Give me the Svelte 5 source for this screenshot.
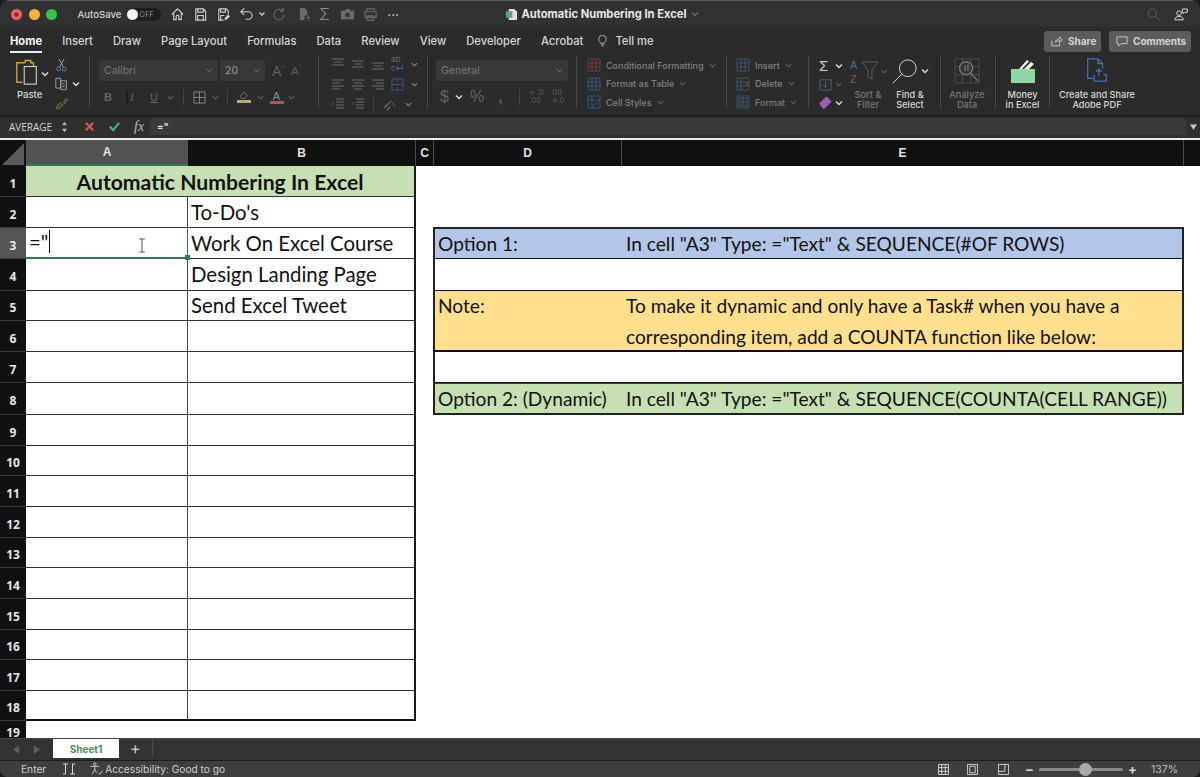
<script>
  const cols = ['A','B','C','D','E'];
  const rows = Array.from({length:19},(_,i)=>i+1);
  const emptyRows = [6,7,8,9,10,11,12,13,14,15,16,17,18];
  const tabs = ['Home','Insert','Draw','Page Layout','Formulas','Data','Review','View','Developer','Acrobat'];
</script>

<div class="window">
  <header class="titlebar">
    <div class="tb-left">
      <span class="light l-red"></span><span class="light l-yellow"></span><span class="light l-green"></span>
      <span class="autosave">AutoSave</span>
      <span class="toggle"><span class="knob"></span><span class="off">OFF</span></span>
      <svg class="qa first" viewBox="0 0 16 16"><path d="M2 8 8 2l6 6M4 7v6.500h2.600V10a1.400 1.400 0 0 1 2.800 0v3.500H12V7"/></svg>
      <svg class="qa" viewBox="0 0 16 16"><path d="M3 2h8l2.500 2.500V14H3zM5 2v3.500h6V2M5 14V9h6v5"/></svg>
      <svg class="qa" viewBox="0 0 16 16"><path d="M3 2h8l2 2v4M3 2v12h5M5 2v3.500h5V2M5 14V9h4"/><path class="fill" d="m9 14 .6-2.600 3.400-3.400 2 2-3.400 3.400z"/></svg>
      <svg class="qa undo" viewBox="0 0 16 16"><path d="M2 5h8a3.800 3.800 0 0 1 0 8H7M5.500 1.500 2 5l3.500 3.500"/></svg>
      <svg class="caret" viewBox="0 0 8 8"><path d="m1.500 2.500 2.500 2.500 2.500-2.500"/></svg>
      <svg class="qa dim redo" viewBox="0 0 16 16"><path d="M13 8a5.500 5.500 0 1 1-1.800-4M12 1v3.500H8.500"/></svg>
      <svg class="qa dim sortico" viewBox="0 0 16 16"><path class="fill" d="M3 1h5l3 3v5H8v5H3z"/><path d="M12 9v5M9.500 11.500h5"/></svg>
      <span class="qa-sigma">Σ</span>
      <svg class="qa dim camera" viewBox="0 0 16 16"><path class="fill" d="M1 4h4l1-2h4l1 2h4v9H1z"/><circle class="hole" cx="8" cy="8.500" r="2.500"/></svg>
      <svg class="qa dim" viewBox="0 0 16 16"><path d="M4 5V2h8v3M2 5h12v6H2zM4.500 9.500h7V14h-7z"/></svg>
      <span class="more">•••</span>
    </div>
    <div class="tb-title">
      <svg class="docicon" viewBox="0 0 14 14"><path class="doc-w" d="M4 1h6l3 3v9H4z"/><path class="doc-g" d="M1 3.500h7v7H1z"/></svg>
      <span>Automatic Numbering In Excel</span>
      <svg class="caret faint" viewBox="0 0 8 8"><path d="m1 2.500 3 3 3-3"/></svg>
    </div>
    <div class="tb-right">
      <svg class="search" viewBox="0 0 16 16"><circle cx="6.500" cy="6.500" r="5"/><path d="m10 10 5 5"/></svg>
      <svg class="people" viewBox="0 0 18 16"><circle cx="6" cy="7" r="2.800"/><path d="M1 15c0-3 2-4 5-4s5 1 5 4zM10 2h6v4h-3l-2 1.500V6h-1z"/></svg>
    </div>
  </header>

  <nav class="tabbar">
    {#each tabs as t, i}
      <span class="tab" class:active={i===0}>{t}</span>
    {/each}
    <svg class="bulb" viewBox="0 0 12 16"><path d="M3.500 11C3 9 1 8 1 5.500a5 5 0 0 1 10 0C11 8 9 9 8.500 11zM4 13h4M5 15h2"/></svg>
    <span class="tab tellme">Tell me</span>
    <span class="spacer"></span>
    <button class="pill share">
      <svg viewBox="0 0 14 12"><path d="M1 5v6h9V8M5 7c.5-3 3-4 5-4V1l3.500 3L10 7V5C8 5 6 5.500 5 7z"/></svg>Share
    </button>
    <button class="pill comments">
      <svg viewBox="0 0 14 13"><path d="M1 1h12v8H6l-3 3V9H1z"/></svg>Comments
    </button>
  </nav>

  <section class="ribbon">
    <div class="grp clip">
      <div class="paste">
        <svg class="paste-ico" viewBox="0 0 28 30">
          <path class="clipb" d="M12 4H3v21h6M12 4V1.500h6V4h3v4"/>
          <rect class="pdoc" x="11" y="8" width="13" height="19"/>
        </svg>
        <svg class="mini-caret" viewBox="0 0 8 8"><path d="m1 2.500 3 3 3-3"/></svg>
        <span class="paste-l">Paste</span>
      </div>
      <div class="clip-tools">
        <svg class="tool" viewBox="0 0 14 16"><path class="grey" d="M4 1l5 9M10 1 5 10"/><circle class="s-blue" cx="3.800" cy="12.500" r="2.200"/><circle class="s-blue" cx="10.200" cy="12.500" r="2.200"/></svg>
        <div class="rowc"><svg class="tool" viewBox="0 0 16 16"><path class="grey" d="M1 1h6v12H1zM7 4h7v11H7z"/><path class="grey" d="M9 8h3M9 11h3"/></svg><svg class="mini-caret" viewBox="0 0 8 8"><path d="m1 2.500 3 3 3-3"/></svg></div>
        <svg class="tool painter" viewBox="0 0 16 16"><path class="olive" d="M2 14c0-3 1-5 4-7l3 3c-2 3-4 4-7 4zM9 7l4-5 1.500 1.500-4 5"/></svg>
      </div>
    </div>

    <div class="grp font">
      <div class="frow">
        <span class="box fname">Calibri<svg class="dim-caret" viewBox="0 0 8 8"><path d="m1 2.500 3 3 3-3"/></svg></span>
        <span class="box fsize">20<svg class="dim-caret" viewBox="0 0 8 8"><path d="m1 2.500 3 3 3-3"/></svg></span>
        <span class="aa big">A<sup>^</sup></span><span class="aa small">A<sup>ˇ</sup></span>
      </div>
      <div class="frow second">
        <span class="fmt b">B</span><span class="fmt i">I</span><span class="fmt u">U</span>
        <svg class="dim-caret" viewBox="0 0 8 8"><path d="m1 2.500 3 3 3-3"/></svg>
        <i class="vr"></i>
        <svg class="bord" viewBox="0 0 14 14"><path d="M1 1h12v12H1zM7 1v12M1 7h12"/></svg>
        <svg class="dim-caret" viewBox="0 0 8 8"><path d="m1 2.500 3 3 3-3"/></svg>
        <i class="vr"></i>
        <span class="colored"><svg class="bucket" viewBox="0 0 14 10"><path d="m3 6 4-5 4 4-3 3H4z"/></svg><i class="bar tan"></i></span>
        <svg class="dim-caret" viewBox="0 0 8 8"><path d="m1 2.500 3 3 3-3"/></svg>
        <span class="colored second-color"><span class="fa">A</span><i class="bar rose"></i></span>
        <svg class="dim-caret" viewBox="0 0 8 8"><path d="m1 2.500 3 3 3-3"/></svg>
      </div>
    </div>

    <div class="grp align">
      <div class="aligngrid">
        <svg class="al" viewBox="0 0 14 12"><path d="M1 1h12M3 4h8M1 7h12"/></svg>
        <svg class="al" viewBox="0 0 14 12"><path d="M1 3h12M3 6h8M1 9h12"/></svg>
        <svg class="al" viewBox="0 0 14 12"><path d="M1 5h12M3 8h8M1 11h12"/></svg>
        <span class="abc">ab<br/>c<b>↵</b></span>
        <svg class="al-caret" viewBox="0 0 8 8"><path d="m1 2.500 3 3 3-3"/></svg>
        <svg class="al" viewBox="0 0 14 12"><path d="M1 2h12M1 5h8M1 8h12M1 11h8"/></svg>
        <svg class="al" viewBox="0 0 14 12"><path d="M1 2h12M3 5h8M1 8h12M3 11h8"/></svg>
        <svg class="al" viewBox="0 0 14 12"><path d="M1 2h12M5 5h8M1 8h12M5 11h8"/></svg>
        <svg class="merge" viewBox="0 0 14 14"><path class="bl2" d="M1 1h12v12H1zM1 7h3M10 7h3M7 1v3M7 10v3"/><path class="bl2" d="M4 7h6"/></svg>
        <svg class="al-caret" viewBox="0 0 8 8"><path d="m1 2.500 3 3 3-3"/></svg>
        <svg class="al" viewBox="0 0 14 12"><path class="bl2" d="m1 4 2 1.500L1 7"/><path d="M5 1h8M5 4h8M5 7h8M5 10h8"/></svg>
        <svg class="al" viewBox="0 0 14 12"><path class="bl2" d="M3 4 1 5.500 3 7"/><path d="M5 1h8M5 4h8M5 7h8M5 10h8"/></svg>
        <i class="vr al-vr"></i>
        <svg class="orient" viewBox="0 0 14 14"><path d="m2 11 6-6M5 13l3-3"/><path class="bl2" d="m9 4 4 6"/></svg>
        <svg class="al-caret lastc" viewBox="0 0 8 8"><path d="m1 2.500 3 3 3-3"/></svg>
      </div>
    </div>

    <div class="grp number">
      <span class="box general">General<svg class="dim-caret" viewBox="0 0 8 8"><path d="m1 2.500 3 3 3-3"/></svg></span>
      <div class="frow numrow">
        <span class="nm">$</span>
        <svg class="mini-caret" viewBox="0 0 8 8"><path d="m1 2.500 3 3 3-3"/></svg>
        <span class="nm pct-ico">%</span>
        <span class="nm comma">,</span>
        <i class="vr"></i>
        <span class="dec"><b>←</b>.0<br/>.00</span>
        <span class="dec">.00<br/><b>→</b>.0</span>
      </div>
    </div>

    <div class="grp styles">
      <div class="sline"><svg class="cellico" viewBox="0 0 14 14"><path class="s-red" d="M1 1h12v12H1zM1 5h12M1 9h12M5 1v12M9 1v12"/></svg>Conditional Formatting<svg class="dim-caret" viewBox="0 0 8 8"><path d="m1 2.500 3 3 3-3"/></svg></div>
      <div class="sline"><svg class="cellico" viewBox="0 0 14 14"><path class="bl2" d="M1 1h12v12H1zM1 5h12M1 9h12M5 1v12M9 1v12"/></svg>Format as Table<svg class="dim-caret" viewBox="0 0 8 8"><path d="m1 2.500 3 3 3-3"/></svg></div>
      <div class="sline"><svg class="cellico" viewBox="0 0 14 14"><path class="bl2" d="M1 1h12v12H1zM1 5h12M5 1v12M4 13l9-8"/></svg>Cell Styles<svg class="dim-caret" viewBox="0 0 8 8"><path d="m1 2.500 3 3 3-3"/></svg></div>
    </div>

    <div class="grp cells">
      <div class="sline"><svg class="cellico" viewBox="0 0 14 14"><path class="bl2" d="M1 1h12v12H1zM1 5h12M1 9h12M5 1v12M9 1v12"/></svg>Insert<svg class="dim-caret" viewBox="0 0 8 8"><path d="m1 2.500 3 3 3-3"/></svg></div>
      <div class="sline"><svg class="cellico" viewBox="0 0 14 14"><path class="bl2" d="M1 1h12v12H1zM1 5h12M1 9h12M5 1v12"/><path class="s-red" d="m9 5 4 4M13 5 9 9"/></svg>Delete<svg class="dim-caret" viewBox="0 0 8 8"><path d="m1 2.500 3 3 3-3"/></svg></div>
      <div class="sline"><svg class="cellico" viewBox="0 0 14 14"><path class="bl2" d="M3 3h8v8H3zM3 7h8M7 3v8M1 1v12M13 1v12M1 1h12M1 13h12"/></svg>Format<svg class="dim-caret" viewBox="0 0 8 8"><path d="m1 2.500 3 3 3-3"/></svg></div>
    </div>

    <div class="grp editing">
      <div class="ed-col">
        <div class="rowc"><span class="sig">Σ</span><svg class="mini-caret" viewBox="0 0 8 8"><path d="m1 2.500 3 3 3-3"/></svg></div>
        <div class="rowc"><svg class="fillico" viewBox="0 0 14 14"><path d="M1 2h12v11H1zM7 4v6M5 8l2 2 2-2"/></svg><svg class="dim-caret" viewBox="0 0 8 8"><path d="m1 2.500 3 3 3-3"/></svg></div>
        <div class="rowc"><svg class="eraser" viewBox="0 0 14 14"><path d="m1 8 7-7 5 5-7 7H4z"/></svg><svg class="mini-caret" viewBox="0 0 8 8"><path d="m1 2.500 3 3 3-3"/></svg></div>
      </div>
      <div class="big-btn sort">
        <div class="rowc"><svg class="sortf" viewBox="0 0 32 26"><text class="az a" x="1" y="11">A</text><text class="az z" x="1" y="25">Z</text><path d="M13 4h16l-6 8v9l-4-2v-7z"/></svg><svg class="dim-caret" viewBox="0 0 8 8"><path d="m1 2.500 3 3 3-3"/></svg></div>
        <span class="l dim-l">Sort &amp;<br/>Filter</span>
      </div>
      <div class="big-btn find">
        <div class="rowc"><svg class="lens" viewBox="0 0 28 28"><circle cx="17" cy="11" r="9"/><path d="M10.500 17.500 1 27"/></svg><svg class="mini-caret" viewBox="0 0 8 8"><path d="m1 2.500 3 3 3-3"/></svg></div>
        <span class="l">Find &amp;<br/>Select</span>
      </div>
    </div>

    <div class="grp big-btn analyze">
      <svg class="an" viewBox="0 0 28 28"><path d="M1 1h26v26H1zM1 9h26M1 18h26M9 1v26M18 1v26"/><circle class="ring" cx="13" cy="11" r="7"/><path class="thick" d="m18 16 8 9"/><path class="bars" d="M11 8h2v6h-2zM14 7h2v7h-2z"/></svg>
      <span class="l dim-l">Analyze<br/>Data</span>
    </div>

    <div class="grp big-btn money">
      <svg class="mo" viewBox="0 0 26 26"><path class="mg" d="M1 11h24v14H1z"/><path class="mw" d="m9 11 8-9 2 1.500-7 7.500zM14 11l7-7 3 2-5 5z"/></svg>
      <span class="l">Money<br/>in Excel</span>
    </div>

    <div class="grp big-btn adobe">
      <svg class="pdf" viewBox="0 0 24 28"><path d="M8 22H2V1h11l5 5v5M13 1v5h5M14 19v-7m-3 3 3-3 3 3M9 18v7h13v-7h-3"/></svg>
      <span class="l">Create and Share<br/>Adobe PDF</span>
    </div>
  </section>

  <div class="formulabar">
    <span class="namebox">AVERAGE</span>
    <span class="stepper"><svg viewBox="0 0 8 14"><path d="M4 1 7 5H1zM4 13 1 9h6z"/></svg></span>
    <svg class="fx-x" viewBox="0 0 12 12"><path d="m2 2 8 8M10 2l-8 8"/></svg>
    <svg class="fx-c" viewBox="0 0 14 12"><path d="m2 6 3.500 4L12 2"/></svg>
    <span class="fx">fx</span>
    <span class="finput">="</span>
    <span class="fdrop"><svg viewBox="0 0 8 6"><path d="M0 0h8L4 6z"/></svg></span>
  </div>

  <div class="colhead">
    <span class="corner"><svg viewBox="0 0 24 24"><path d="M24 0v24H0z"/></svg></span>
    {#each cols as c, i}
      <span class="col col-{c}" class:sel={i===0}>{c}</span>
    {/each}
    <span class="col-rest"></span>
  </div>

  <main class="sheet-area">
    <div class="sheet">
      {#each rows as r}
        <span class="rh" class:rsel={r===3} style="grid-row:{r}">{r}</span>
      {/each}

      <div class="c merged title">Automatic Numbering In Excel</div>

      <div class="c a r2"></div>
      <div class="c b r2">To-Do's</div>
      <div class="c a r3 editing-cell">="<i class="caretbar"></i>
        <svg class="ibeam" viewBox="0 0 8 16"><path d="M1 1h6M4 1v14M1 15h6"/></svg>
        <i class="handle"></i>
      </div>
      <div class="c b r3">Work On Excel Course</div>
      <div class="c a r4"></div>
      <div class="c b r4">Design Landing Page</div>
      <div class="c a r5"></div>
      <div class="c b r5">Send Excel Tweet</div>
      {#each emptyRows as r}
        <div class="c a" class:last={r===18} style="grid-row:{r}"></div>
        <div class="c b" class:last={r===18} style="grid-row:{r}"></div>
      {/each}

      <div class="o d o-blue r3">Option 1:</div>
      <div class="o e o-blue r3">In cell "A3" Type: ="Text" &amp; SEQUENCE(#OF ROWS)</div>
      <div class="o span r4"></div>
      <div class="o d o-yellow note">Note:</div>
      <div class="o e o-yellow note">To make it dynamic and only have a Task# when you have a<br/>corresponding item, add a COUNTA function like below:</div>
      <div class="o span r7"></div>
      <div class="o d o-green r8">Option 2: (Dynamic)</div>
      <div class="o e o-green r8">In cell "A3" Type: ="Text" &amp; SEQUENCE(COUNTA(CELL RANGE))</div>
    </div>
  </main>

  <div class="sheetbar">
    <svg class="nav" viewBox="0 0 8 10"><path d="M7 0v10L0 5z"/></svg>
    <svg class="nav" viewBox="0 0 8 10"><path d="M1 0v10l7-5z"/></svg>
    <span class="stab">Sheet1</span>
    <span class="plus">+</span>
    <i class="sb-sep"></i>
  </div>

  <footer class="status">
    <span class="st-enter">Enter</span>
    <svg class="st-ico macro" viewBox="0 0 14 14"><path d="M1 2h5M3.500 2v10H1M8 12h5M10.500 12V2H13"/></svg>
    <svg class="st-ico acc" viewBox="0 0 16 16"><circle cx="6" cy="2.500" r="1.500"/><path d="M1 5h10M6 5v4l-3 5M6 9l2 3M10 12l2 2 3-4"/></svg>
    <span class="st-acc">Accessibility: Good to go</span>
    <span class="spacer"></span>
    <svg class="st-view st-first" viewBox="0 0 12 12"><path d="M.5.500h11v11H.5zM4 .500v11M8 .500v11M.5 4h11M.5 8h11"/></svg>
    <svg class="st-view" viewBox="0 0 12 12"><path d="M.5.500h11v11H.5zM3 2.500h6v7H3z"/></svg>
    <svg class="st-view st-last" viewBox="0 0 12 12"><path d="M.5.500h11v11H.5zM.5 8h7V.500"/></svg>
    <span class="zm">−</span>
    <span class="slider"><i class="thumb"></i></span>
    <span class="zm">+</span>
    <span class="pct">137%</span>
  </footer>
</div>

<style>
  :global(body){margin:0;background:#1c1c1c;}
  .window{width:1200px;height:777px;display:flex;flex-direction:column;overflow:hidden;border-radius:10px 10px 8px 8px;background:#2c2c2c;font-family:Inter,"Liberation Sans",sans-serif;color:#e8e8e8;position:relative;}
  svg{fill:none;stroke:currentColor;flex:none;display:block;}
  .spacer{flex:1;}
  .rowc{display:flex;align-items:center;}

  /* title bar */
  .titlebar{height:27px;flex:none;background:#313131;display:grid;grid-template-columns:1fr auto 1fr;align-items:center;border-top:1px solid #5a5a5a;box-sizing:border-box;}
  .tb-left{display:flex;align-items:center;padding-left:11px;}
  .light{width:11px;height:11px;border-radius:50%;margin-right:6.500px;}
  .l-red{background:radial-gradient(circle,#a8182a 0 20%,#ec5f67 35%);}
  .l-yellow{background:#f2b33c}.l-green{background:#37c24f}
  .autosave{margin-left:14px;font-size:9.600px;font-weight:500;color:#d4d4d4;}
  .toggle{margin-left:5px;width:34px;height:13px;border-radius:7px;background:#1d1d1d;display:flex;align-items:center;gap:2px;}
  .knob{width:11px;height:11px;border-radius:50%;background:#f4f4f4;}
  .off{font-size:7px;color:#9a9a9a;letter-spacing:.3px;}
  .qa{width:15px;height:15px;color:#cfcfcf;margin-left:8px;stroke-width:1.200;}
  .qa.first{margin-left:9px;}
  .qa .fill{fill:currentColor;stroke:none;}
  .qa.dim{color:#6b6b6b;}
  .qa.redo{margin-left:6.500px;}
  .caret{width:8px;height:8px;stroke-width:1.300;color:#cfcfcf;margin-left:4px;}
  .caret.faint{color:#6a6a6a;margin-left:1px;}
  .qa-sigma{margin-left:7px;font-size:16px;color:#8a8a8a;width:13px;font-weight:300;}
  .qa.sortico{margin-left:10px;}
  .qa.camera{margin-left:8px;}
  .hole{fill:#313131;stroke:none;}
  .more{margin-left:9.500px;font-size:6px;letter-spacing:.5px;color:#cfcfcf;}
  .tb-title{display:flex;align-items:center;font-size:11.200px;font-weight:700;color:#e6e6e6;gap:3px;margin-left:4px;}
  .docicon{width:13px;height:13px;stroke:none;}
  .doc-w{fill:#e2e2e2;stroke:none}.doc-g{fill:#5fa37a;stroke:none}
  .tb-right{display:flex;justify-content:flex-end;align-items:center;gap:14px;padding-right:11px;}
  .search{width:13px;height:13px;color:#666;stroke-width:1;}
  .people{width:15px;height:14px;color:#d8d8d8;stroke-width:1.200;}

  /* tabs */
  .tabbar{height:28px;flex:none;background:#2b2b2b;display:flex;align-items:center;padding:0 9px 0 10px;box-sizing:border-box;}
  .tab{font-size:11.200px;font-weight:500;color:#d6d6d6;margin-right:20.100px;position:relative;line-height:14px;}
  .tab.active{color:#f5f5f5;font-weight:700;}
  .tab.active::after{content:"";position:absolute;left:0;right:0;bottom:-5px;height:2px;background:#eee;}
  .bulb{width:9px;height:14px;color:#cfcfcf;margin:0 8px 0 -5px;stroke-width:1;}
  .tab.tellme{margin:0;}
  .pill{height:21px;border:0;border-radius:3px;background:#5c5c5c;color:#d4d4d4;font:700 10px Inter,"Liberation Sans",sans-serif;display:flex;align-items:center;gap:5px;padding:0 6px;}
  .pill svg{width:12px;height:11px;stroke-width:1;}
  .pill.share{width:57px;margin-right:8px;padding-left:7px;box-sizing:border-box;}
  .pill.comments{width:82px;box-sizing:border-box;padding-left:7px;}

  /* ribbon */
  .ribbon{height:60px;flex:none;background:#2b2b2b;display:flex;box-sizing:border-box;padding:1px 0 7px;box-shadow:0 1px 2px #111;position:relative;z-index:1;}
  .grp{box-sizing:border-box;border-right:1px solid #4a4a4a;position:relative;}
  .grp:last-child{border-right:0;}
  .clip{width:90px;display:flex;padding-left:14px;}
  .paste{width:34px;position:relative;padding-top:3px;}
  .paste-ico{width:26px;height:28px;}
  .clipb{stroke:#d0a040;stroke-width:1.500;}
  .pdoc{stroke:#cfcfcf;stroke-width:1.200;}
  .paste .mini-caret{position:absolute;left:27px;top:14px;}
  .paste-l{display:block;font-size:9.500px;font-weight:500;color:#d8d8d8;margin-top:2px;margin-left:3px;}
  .mini-caret{width:8px;height:8px;color:#d8d8d8;stroke-width:1.500;}
  .dim-caret{width:7px;height:7px;color:#666;stroke-width:1.200;}
  .clip-tools{display:flex;flex-direction:column;gap:5px;padding-left:4px;margin-top:2px;}
  .tool{width:13px;height:14px;stroke-width:1;}
  .clip-tools .tool:first-child{margin-left:3px;}
  .clip-tools .mini-caret{margin-left:4px;}
  .painter{width:14px;height:15px;margin-left:3px;}
  .grey{stroke:#b5b5b5}.s-blue{stroke:#5590d0}.olive{stroke:#7f8460;fill:#3e3e30}

  .font{width:229px;padding:4px 0 0 9px;}
  .frow{display:flex;align-items:center;}
  .box{height:21px;background:#383838;border-radius:2px;font-size:10px;color:#7a7a7a;display:flex;align-items:center;justify-content:space-between;padding:0 5px;box-sizing:border-box;}
  .fname{width:119px;margin-right:2px;font-size:10.500px;}
  .fsize{width:45px;font-size:10.500px;color:#9a9a9a;}
  .aa{color:#5f5f5f;font-size:14px;margin-left:7px;font-family:"Liberation Sans",sans-serif;}
  .aa sup{font-size:8px;line-height:0;}
  .aa.small{font-size:11.500px;margin-left:6px;}
  .second{margin-top:6px;height:20px;padding-left:5px;}
  .fmt{color:#666;font-size:11px;width:22px;font-family:"Liberation Sans",sans-serif;}
  .fmt.b{font-weight:700;}.fmt.i{font-style:italic;font-family:"Liberation Serif",serif;padding-left:2px;width:20px;}.fmt.u{text-decoration:underline;width:17px;}
  .vr{display:block;width:1px;height:16px;background:#454545;margin:0 9px 0 8.500px;flex:none;}
  .bord{width:13px;height:13px;color:#888;stroke-width:1;margin-right:6px;}
  .colored{display:flex;flex-direction:column;align-items:center;width:14px;margin-right:6px;}
  .colored.second-color{margin:0 4.500px 0 5.500px;}
  .bucket{width:14px;height:9px;color:#777;stroke-width:1;}
  .bar{display:block;width:14px;height:3px;}
  .tan{background:#b5a878}.rose{background:#b2525a}
  .fa{font-size:11px;line-height:10px;color:#8a8a8a;font-family:"Liberation Sans",sans-serif;}

  .align{width:109px;padding:0 0 0 12px;}
  .aligngrid{display:grid;grid-template-columns:20px 20px 20px 20px 14px;grid-auto-rows:20px;align-items:center;margin-top:-2px;}
  .al{width:14px;height:12px;color:#6c6c6c;stroke-width:1;}
  .abc{font-size:8px;line-height:9px;color:#666;}
  .abc b{color:#3f6fa0;}
  .merge{width:13px;height:13px;stroke-width:1;}
  .al-caret{width:7px;height:7px;color:#8a8a8a;stroke-width:1.300;}
  .al-vr{margin:0 0 0 2px;height:17px;}
  .orient{width:14px;height:14px;color:#7a6a7a;stroke-width:1.100;margin-left:-9px;}
  .lastc{margin-left:-6px;}

  .number{width:149px;padding:4px 0 0 8px;}
  .general{width:132px;font-size:10.500px;}
  .numrow{margin-top:6px;height:20px;padding-left:4px;}
  .nm{font-size:16px;color:#626262;margin-right:8px;font-family:"Liberation Sans",sans-serif;}
  .numrow .mini-caret{margin-right:5px;margin-left:-2px;}
  .pct-ico{font-size:16px;margin-left:2px;}
  .comma{margin-left:6px;font-weight:700;line-height:10px;}
  .numrow .vr{margin:0 10px 0 8px;}
  .dec{font-size:7.500px;line-height:8px;color:#5f5f5f;margin-right:7px;}
  .dec b{color:#3f6fa0;font-weight:400;}

  .styles{width:150px;padding:2px 0 0 10px;display:flex;flex-direction:column;gap:4.500px;}
  .cells{width:82px;padding:2px 0 0 9px;display:flex;flex-direction:column;gap:4.500px;}
  .sline{display:flex;align-items:center;font-size:9px;font-weight:500;color:#808080;height:14px;gap:5px;white-space:nowrap;}
  .cellico{width:14px;height:14px;stroke-width:.9;}
  .s-red{stroke:#7f3a40}.bl2{stroke:#42597a}

  .editing{width:132px;display:flex;padding-left:10px;}
  .ed-col{display:flex;flex-direction:column;gap:5px;width:30px;padding-top:3px;}
  .ed-col .rowc{height:14px;gap:3px;}
  .sig{font-size:15px;width:13px;color:#c8c8c8;line-height:14px;font-family:"Liberation Sans",sans-serif;}
  .fillico{width:13px;height:13px;color:#55687a;stroke-width:1;}
  .eraser{width:13px;height:13px;color:#b06ac0;fill:#a45cb0;stroke-width:1;}
  .big-btn{display:flex;flex-direction:column;align-items:center;padding-top:2px;}
  .sort{width:44px;margin-left:-3px;}
  .find{width:40px;}
  .sortf{width:32px;height:26px;color:#5d5d5d;stroke-width:1;}
  .az{font:11px "Liberation Sans",sans-serif;stroke:none;}
  .az.a{fill:#3f6fa0}.az.z{fill:#666}
  .lens{width:26px;height:26px;color:#dadada;stroke-width:1;}
  .find .mini-caret{margin-left:3px;}
  .l{font-size:9.200px;font-weight:500;line-height:10px;text-align:center;color:#d8d8d8;display:block;margin-top:6px;}
  .dim-l{color:#777;}
  .analyze{width:55px;padding-right:2px;}
  .an{width:26px;height:26px;color:#555;stroke-width:.8;}
  .ring{stroke:#777;stroke-width:1.500;fill:#333;}.thick{stroke:#777;stroke-width:1.500;}.bars{fill:#666;stroke:none;}
  .money{width:54px;}
  .mo{width:26px;height:26px;stroke:none;}
  .mg{fill:#8fd8a4}.mw{fill:#f0f0f0}
  .adobe{width:94px;white-space:nowrap;}
  .pdf{width:24px;height:26px;color:#3d73c0;stroke-width:1.300;}

  /* formula bar */
  .formulabar{height:23px;flex:none;background:#2f2f2f;display:flex;align-items:center;box-sizing:border-box;}
  .namebox{font-size:10px;color:#d6d6d6;width:52px;padding-left:9px;box-sizing:border-box;font-weight:500;font-family:"Open Sans",sans-serif;}
  .stepper{width:8px;margin-left:9px;color:#b0b0b0;}
  .stepper svg{width:7px;height:14px;fill:currentColor;stroke:none;}
  .fx-x{width:11px;height:11px;color:#d25a5a;stroke-width:2.400;margin-left:15px;}
  .fx-c{width:13px;height:11px;color:#52b070;stroke-width:2.200;margin-left:13px;}
  .fx{font:italic 14px "Liberation Serif",serif;color:#bbb;margin-left:13px;width:16px;}
  .finput{flex:1;background:#3a3a3a;height:17px;padding-left:7px;font-size:9.500px;font-weight:700;line-height:17px;color:#ddd;border-radius:2px;}
  .fdrop{width:14px;display:flex;justify-content:center;}
  .fdrop svg{width:7px;height:6px;fill:#c8c8c8;stroke:none;}

  /* col headers */
  .colhead{height:28px;flex:none;background:#101010;display:flex;border-top:2px solid #ececec;box-sizing:border-box;font-family:"Liberation Sans",sans-serif;}
  .corner{width:26px;box-sizing:border-box;padding:3px 1px 1px 1px;}
  .corner svg{width:24px;height:22px;fill:#5a5a5a;stroke:none;}
  .col{display:flex;align-items:center;justify-content:center;font-size:12px;font-weight:700;color:#e2e2e2;border-right:1px solid #4a4a4a;box-sizing:border-box;}
  .col.sel{background:#525252;border-right:0;border-bottom:2px solid #2f7a4e;}
  .col-A{width:162px}.col-B{width:228px}.col-C{width:18px}.col-D{width:188px}.col-E{width:562px}
  .col-rest{flex:1;}

  /* grid */
  .sheet-area{flex:1;min-height:0;overflow:hidden;background:#fff;}
  .sheet{display:grid;grid-template-columns:26px 162px 228px 17px 189px 562px 1fr;grid-template-rows:31px 31px 31px 32px 30px 31px 31px 32px 31px 30px 31px 31px 30px 31px 31px 30px 31px 30px 20px;background:#fff;font-family:Lato,"Open Sans",sans-serif;color:#111;}
  .rh{grid-column:1;background:#101010;color:#e6e6e6;font:700 12px "Open Sans",sans-serif;display:flex;align-items:center;justify-content:center;padding-top:4px;box-sizing:border-box;border-bottom:1px solid #3a3a3a;}
  .rh.rsel{background:#555;}
  .c{border-right:1px solid #444;border-bottom:1px solid #333;box-sizing:border-box;display:flex;align-items:center;font-size:20.400px;line-height:27px;padding-left:3px;white-space:nowrap;}
  .a{grid-column:2;}
  .b{grid-column:3;border-right:2px solid #1a1a1a;}
  .c.last{border-bottom:2px solid #111;}
  .merged.title{grid-column:2 / span 2;grid-row:1;background:#c6e0b4;justify-content:center;font-weight:700;font-size:21.200px;padding:3px 0 0;align-items:center;border-right:2px solid #1a1a1a;}
  .r2{grid-row:2}.r3{grid-row:3}.r4{grid-row:4}.r5{grid-row:5}.r7{grid-row:7}.r8{grid-row:8}
  .editing-cell{position:relative;border-right:1px solid #2f7a4e;border-bottom:2px solid #2f7a4e;}
  .caretbar{display:block;width:1px;height:23px;background:#111;margin:0 0 3px 1px;}
  .ibeam{position:absolute;left:112px;top:10px;width:8px;height:15px;color:#444;stroke-width:1;}
  .handle{position:absolute;right:-3px;bottom:-3px;width:5px;height:5px;background:#2f7a4e;z-index:1;}
  .o{box-sizing:border-box;font-size:19.150px;line-height:30.500px;white-space:nowrap;border-bottom:1px solid #111;}
  .d{grid-column:5;padding-left:3px;border-left:2px solid #222;}
  .e{grid-column:6;padding-left:4px;border-right:2px solid #222;}
  .o.span{grid-column:5 / span 2;border-left:2px solid #222;border-right:2px solid #222;}
  .o.o-blue{background:#b4c6e7;border-top:2px solid #222;margin-top:-1px;}
  .o.o-yellow{background:#ffe08f;border-bottom:2px solid #111;}
  .o.o-green{background:#c6e0b4;border-bottom:2px solid #222;border-top:1px solid #444;}
  .note{grid-row:5 / span 2;}

  /* sheet tabs */
  .sheetbar{height:22px;flex:none;background:#333;display:flex;align-items:flex-start;border-top:1px solid #444;box-sizing:border-box;padding-left:13px;}
  .nav{width:7px;height:9px;fill:#5e5e5e;stroke:none;margin:6px 13px 0 0;}
  .stab{width:66px;height:19px;background:#fff;color:#4d8a5f;font:700 10px Inter,sans-serif;display:flex;align-items:center;justify-content:center;}
  .plus{font-size:16px;color:#cfcfcf;margin-left:11px;line-height:19px;}
  .sb-sep{width:1px;height:18px;background:#4c4c4c;margin-left:11px;}

  /* status */
  .status{height:17px;flex:none;background:#3e3e3e;display:flex;align-items:center;border-top:1px solid #1c1c1c;box-sizing:border-box;padding-left:21px;font-size:10.200px;color:#cfcfcf;}
  .st-ico{width:14px;height:14px;stroke-width:1;color:#d8d8d8;}
  .macro{margin-left:16px;}
  .acc{margin-left:13px;margin-right:1px;width:15px;}
  .st-view{width:11px;height:11px;color:#d8d8d8;stroke-width:1;margin-right:20px;}
  .st-view.st-first{margin-right:18px;}
  .st-view.st-last{margin-right:16px;}
  .zm{font-size:13px;font-weight:700;color:#d8d8d8;width:9px;line-height:13px;}
  .slider{width:84px;height:3px;border-radius:2px;background:#8a8a8a;position:relative;margin:0 5px;}
  .thumb{position:absolute;left:40px;top:-5px;width:13px;height:13px;border-radius:50%;background:#a8a8a8;}
  .pct{margin-left:14px;margin-right:22px;font-size:10.500px;color:#bdbdbd;}
</style>
